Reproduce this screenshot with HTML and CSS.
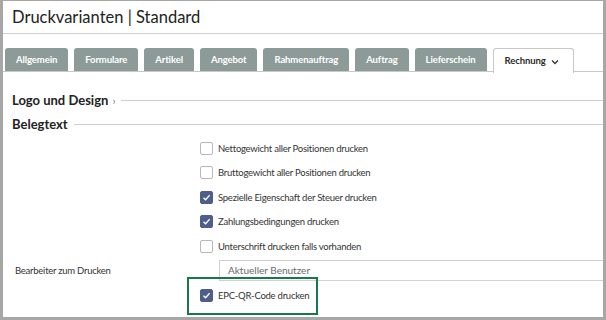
FILE: index.html
```html
<!DOCTYPE html>
<html lang="de">
<head>
    <meta charset="UTF-8">
    <meta name="viewport" content="width=device-width, initial-scale=1.0">
    <title>Druckvarianten | Standard</title>
    <link rel="stylesheet" href="styles.css">
</head>
<body>
    <div class="window">
        <div class="header">Druckvarianten | Standard</div>

        <div class="tabs">
            <div class="tab">Allgemein</div>
            <div class="tab">Formulare</div>
            <div class="tab">Artikel</div>
            <div class="tab">Angebot</div>
            <div class="tab">Rahmenauftrag</div>
            <div class="tab">Auftrag</div>
            <div class="tab">Lieferschein</div>
            <div class="tab active">Rechnung
                <svg class="caret" width="8" height="6" viewBox="0 0 8 6"><path d="M1 1.5 L4 4.5 L7 1.5" fill="none" stroke="#333" stroke-width="1.3"/></svg>
            </div>
        </div>

        <div class="section">
            <span class="section-title">Logo und Design</span>
            <span class="chevron">›</span>
            <span class="rule"></span>
        </div>
        <div class="section">
            <span class="section-title">Belegtext</span>
            <span class="rule"></span>
        </div>

        <div class="form">
            <div class="row">
                <span class="box"></span>Nettogewicht aller Positionen drucken
            </div>
            <div class="row">
                <span class="box"></span>Bruttogewicht aller Positionen drucken
            </div>
            <div class="row">
                <span class="box checked"></span>Spezielle Eigenschaft der Steuer drucken
            </div>
            <div class="row">
                <span class="box checked"></span>Zahlungsbedingungen drucken
            </div>
            <div class="row">
                <span class="box"></span>Unterschrift drucken falls vorhanden
            </div>
            <div class="row field">
                <span class="label">Bearbeiter zum Drucken</span>
                <span class="input">Aktueller Benutzer</span>
            </div>
            <div class="row highlight-row">
                <span class="box checked"></span>EPC-QR-Code drucken
                <span class="highlight"></span>
            </div>
        </div>
    </div>
</body>
</html>
```

FILE: styles.css
```css
body {
    margin: 0;
    background: #a7a7a7;
    font-family: Lato, "Open Sans", sans-serif;
    color: #2b2b2b;
}
.window {
    margin: 1px 3px 0 3px;
    height: 316px;
    background: white;
    overflow: hidden;
}
.header {
    height: 32px;
    line-height: 32px;
    padding-left: 9px;
    font-size: 16.5px;
    color: #222;
    border-bottom: 1px solid #cfcfcf;
}
.tabs {
    display: flex;
    gap: 6px;
    margin-top: 14px;
    padding-left: 2px;
    border-bottom: 1px solid #c8c8c8;
    height: 23px;
}
.tab {
    background: #8d9b98;
    color: white;
    font-size: 9.5px;
    font-weight: bold;
    letter-spacing: -0.1px;
    padding: 0 11px;
    line-height: 23px;
    border-radius: 3px 3px 0 0;
}
.tab.active {
    background: white;
    color: #2b2b2b;
    border: 1px solid #c8c8c8;
    border-bottom: none;
    height: 24px;
    line-height: 26px;
    padding: 0 14px 0 11px;
    display: flex;
    align-items: center;
    gap: 5px;
}
.caret {
    margin-top: 1px;
}
.tabs + .section {
    margin-top: 16px;
}
.section {
    display: flex;
    align-items: center;
    height: 24px;
    padding-left: 9px;
}
.section-title {
    font-size: 13px;
    font-weight: bold;
    color: #222;
}
.chevron {
    color: #6f7fa0;
    font-size: 11px;
    margin-left: 4px;
}
.rule {
    flex: 1;
    height: 1px;
    background: #cfcfcf;
    margin-left: 6px;
}
.form {
    padding-left: 197px;
}
.row {
    position: relative;
    display: flex;
    align-items: center;
    height: 24.5px;
    font-size: 9.5px;
    letter-spacing: -0.25px;
    color: #333;
}
.box {
    width: 11px;
    height: 11px;
    border: 1px solid #b8b8b8;
    border-radius: 2px;
    margin-right: 5px;
    box-sizing: content-box;
}
.box.checked {
    background: #4e5e8b url("data:image/svg+xml,%3Csvg xmlns='http://www.w3.org/2000/svg' width='11' height='11' viewBox='0 0 11 11'%3E%3Cpath d='M2.5 5.8 L4.6 7.8 L8.6 3.2' fill='none' stroke='white' stroke-width='1.3'/%3E%3C/svg%3E") no-repeat center;
    border-color: #4e5e8b;
}
.field {
    margin-left: -185px;
}
.label {
    width: 204px;
}
.input {
    flex: 1;
    height: 19px;
    line-height: 19px;
    border: 1px solid #d0d0d0;
    border-right: none;
    padding-left: 8px;
    font-size: 10px;
    letter-spacing: 0;
    color: #6a6a6a;
}
.highlight {
    position: absolute;
    left: -13px;
    top: -6px;
    width: 127px;
    height: 34px;
    border: 2px solid #18774b;
}
```
